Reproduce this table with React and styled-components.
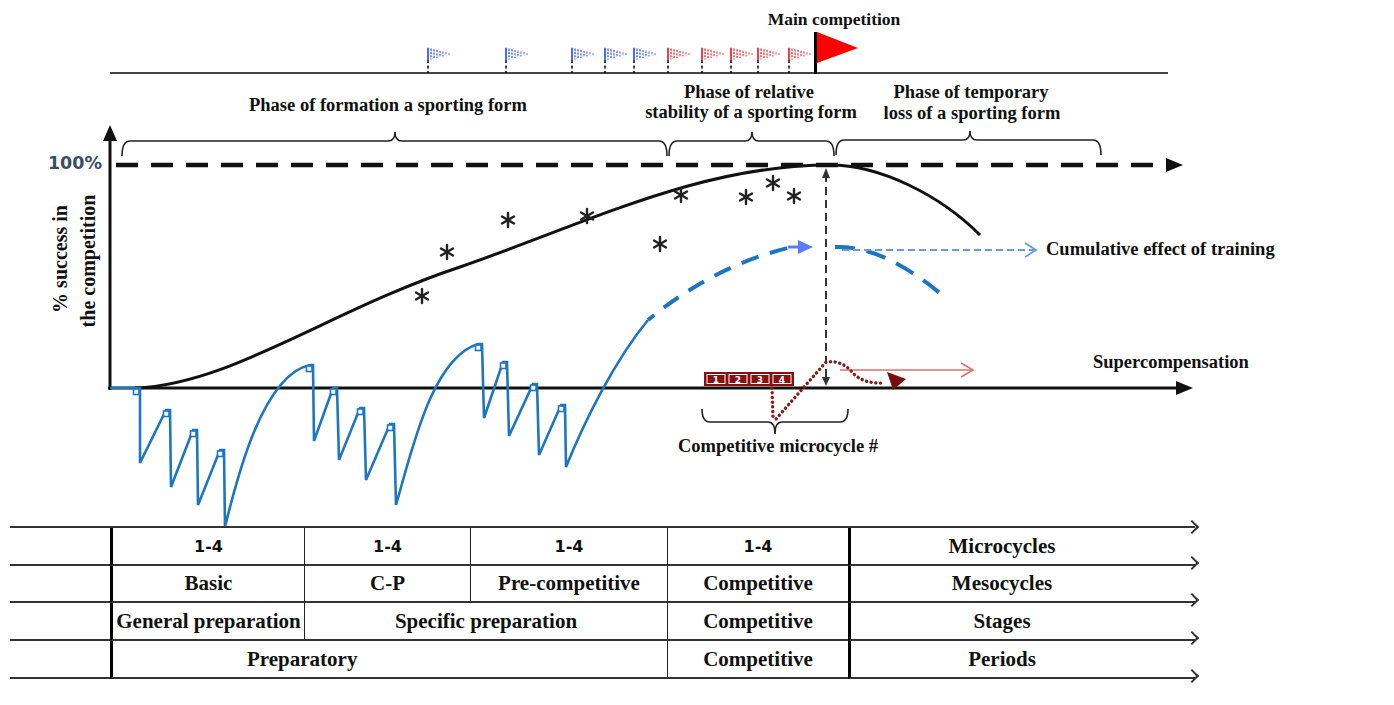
import React from 'react';
import styled, { createGlobalStyle } from 'styled-components';

const GlobalStyle = createGlobalStyle`
  html, body { margin: 0; padding: 0; background: #ffffff; }
  body { font-family: "Liberation Serif", "Times New Roman", serif; color: #111; }
`;

const Page = styled.div`
  position: relative;
  width: 1394px;
  height: 705px;
  overflow: hidden;
  background: #fff;
`;

const Chart = styled.svg`
  display: block;
  width: 1394px;
  height: 526px;
  overflow: visible;
`;

const Label = styled.text`
  font-family: "Liberation Serif", "Times New Roman", serif;
  font-weight: 700;
  font-size: ${p => p.$size || 18.5}px;
  fill: #111;
`;

const SansLabel = styled.text`
  font-family: "DejaVu Sans", "Liberation Sans", sans-serif;
  font-weight: 700;
  font-size: ${p => p.$size || 17}px;
  fill: ${p => p.$color || '#111'};
`;

const Table = styled.div`
  position: relative;
  margin-left: 10px;
  width: 1185px;
  display: grid;
  grid-template-columns: 100px 194px 166px 197px 181px 347px;
  grid-template-rows: 38px 37px 38px 38px;
  border-top: 2px solid #333;
  &::after {
    content: '';
    position: absolute;
    right: -2px;
    top: -6px;
    width: 10px;
    height: 10px;
    box-sizing: border-box;
    border-top: 2px solid #333;
    border-right: 2px solid #333;
    transform: rotate(45deg);
  }
`;

const Cell = styled.div`
  position: relative;
  box-sizing: border-box;
  grid-row: ${p => p.$row};
  grid-column: ${p => p.$col} / span ${p => p.$span || 1};
  display: flex;
  align-items: center;
  justify-content: ${p => (p.$start ? 'flex-start' : 'center')};
  padding-left: ${p => p.$padL || 0}px;
  padding-right: ${p => p.$padR || 0}px;
  border-bottom: 2px solid #333;
  border-left: ${p =>
    p.$edge === 'bold' ? '3px solid #000' : p.$edge === 'thin' ? '1.5px solid #222' : 'none'};
  font-family: ${p =>
    p.$sans ? '"DejaVu Sans", "Liberation Sans", sans-serif' : '"Liberation Serif", "Times New Roman", serif'};
  font-weight: 700;
  font-size: ${p => (p.$sans ? 16 : 21)}px;
  color: #111;
  white-space: nowrap;
  ${p =>
    p.$arrow &&
    `&::after {
      content: '';
      position: absolute;
      right: -2px;
      bottom: -4px;
      width: 10px;
      height: 10px;
      box-sizing: border-box;
      border-top: 2px solid #333;
      border-right: 2px solid #333;
      transform: rotate(45deg);
    }`}
`;

const BLUE = '#1d76c2';

const Flag = ({ x, color }) => (
  <g>
    <line x1={x} y1={60} x2={x} y2={73} stroke="#111" strokeWidth="1.6" strokeDasharray="3 2.5" />
    {[0, 1, 2, 3, 4, 5, 6, 7].map(i => {
      const h = 6.2 * (1 - i / 8.5);
      return (
        <line
          key={i}
          x1={x + i * 3}
          x2={x + i * 3}
          y1={54 - h}
          y2={54 + h}
          stroke={color}
          strokeWidth={i === 0 ? 2 : 1.6}
          strokeDasharray={i === 0 ? undefined : '2.2 1.1'}
          opacity={1 - i * 0.06}
        />
      );
    })}
  </g>
);

const Star = ({ x, y }) => (
  <g stroke="#222" strokeWidth="2.4" strokeLinecap="round">
    <line x1={x} y1={y - 7} x2={x} y2={y + 7} />
    <line x1={x - 6} y1={y - 3.5} x2={x + 6} y2={y + 3.5} />
    <line x1={x - 6} y1={y + 3.5} x2={x + 6} y2={y - 3.5} />
  </g>
);

const braceUp = (x1, x2, xm, y) =>
  `M${x1},${y + 15} Q${x1},${y} ${x1 + 8},${y} L${xm - 7},${y} Q${xm},${y} ${xm},${y - 9} Q${xm},${y} ${xm + 7},${y} L${x2 - 8},${y} Q${x2},${y} ${x2},${y + 15}`;

const braceDown = (x1, x2, xm, y) =>
  `M${x1},${y - 13} Q${x1},${y} ${x1 + 8},${y} L${xm - 7},${y} Q${xm},${y} ${xm},${y + 12} Q${xm},${y} ${xm + 7},${y} L${x2 - 8},${y} Q${x2},${y} ${x2},${y - 13}`;

const corners = [
  [140, 388], [170, 410], [197, 430], [224, 450],
  [313, 365], [337, 388], [364, 408], [394, 424],
  [482, 344], [507, 362], [537, 384], [565, 405],
];

const stars = [
  [422, 296], [447, 252], [508, 220], [587, 216], [660, 244],
  [681, 195], [746, 197], [773, 183], [794, 196],
];

const blueFlags = [428, 506, 572, 605, 634];
const redFlags = [668, 702, 731, 758, 789];

const sawtooth =
  'M110,388 L140,388 L140,463 L166,410 L170,410 L171,487 L193,430 L197,430 L198,505 L220,450 L224,450 L225,527 ' +
  'C236,482 262,375 310,365 L313,365 L314,441 L333,388 L337,388 L339,460 L360,408 L364,408 L366,480 L390,424 L394,424 L396,505 ' +
  'C412,450 432,358 478,344 L482,344 L484,418 L503,362 L507,362 L509,436 L533,384 L537,384 L539,455 L561,405 L565,405 L566,467 ' +
  'C585,420 615,360 648,320';

const ChartDrawing = () => (
  <Chart viewBox="0 0 1394 526">
    {/* top timeline */}
    <Label x={834} y={25} textAnchor="middle" $size={17.5}>Main competition</Label>
    <line x1={110} y1={73} x2={1168} y2={73} stroke="#444" strokeWidth="2" />
    {blueFlags.map(x => <Flag key={x} x={x} color="#4a6cf4" />)}
    {redFlags.map(x => <Flag key={x} x={x} color="#ee4048" />)}
    <rect x={814} y={32} width={3} height={42} fill="#000" />
    <polygon points="817,32 858,48 817,63" fill="#ff0000" />

    {/* phase labels */}
    <Label x={388} y={111} textAnchor="middle">Phase of formation a sporting form</Label>
    <Label x={749} y={98} textAnchor="middle">Phase of relative</Label>
    <Label x={751} y={118} textAnchor="middle">stability of a sporting form</Label>
    <Label x={971} y={98} textAnchor="middle">Phase of temporary</Label>
    <Label x={972} y={119} textAnchor="middle">loss of a sporting form</Label>

    {/* braces */}
    <g fill="none" stroke="#222" strokeWidth="1.6">
      <path d={braceUp(122, 667, 395, 141)} />
      <path d={braceUp(669, 834, 752, 141)} />
      <path d={braceUp(836, 1101, 970, 140)} />
      <path d={braceDown(702, 848, 775, 422)} />
    </g>

    {/* axes */}
    <line x1={110} y1={140} x2={110} y2={390} stroke="#111" strokeWidth="3" />
    <polygon points="110,125 103,141 117,141" fill="#111" />
    <line x1={108} y1={388} x2={1178} y2={388} stroke="#111" strokeWidth="3" />
    <polygon points="1176,381 1193,388 1176,395" fill="#111" />
    <SansLabel x={102} y={169} textAnchor="end" $size={17.5} $color="#3a4c66">100%</SansLabel>
    <line x1={116} y1={165} x2={1166} y2={165} stroke="#111" strokeWidth="4.5" strokeDasharray="22 13" />
    <polygon points="1166,158 1183,165 1166,172" fill="#111" />

    <Label transform="rotate(-90)" x={-259} y={67} textAnchor="middle" $size={20}>% success in</Label>
    <Label transform="rotate(-90)" x={-261} y={95} textAnchor="middle" $size={20}>the competition</Label>

    {/* black performance curve */}
    <path
      d="M135,388 C230,385 330,310 460,267 C590,222 700,165 830,165 C880,165 940,195 980,235"
      fill="none"
      stroke="#111"
      strokeWidth="3"
    />
    {stars.map(([x, y]) => <Star key={x} x={x} y={y} />)}

    {/* blue training curve */}
    <path d={sawtooth} fill="none" stroke={BLUE} strokeWidth="2.6" strokeLinejoin="miter" />
    {corners.map(([x, y]) => (
      <rect key={x} x={x - 6.5} y={y + 1} width={5.5} height={5.5} fill="#fff" stroke={BLUE} strokeWidth="1.6" />
    ))}
    <path d="M648,320 Q715,265 792,247" fill="none" stroke={BLUE} strokeWidth="4" strokeDasharray="18 12" strokeDashoffset="10" />
    <line x1={788} y1={247} x2={800} y2={247} stroke="#5b7cf2" strokeWidth="3" />
    <polygon points="798,240 813,247 798,254" fill="#5b7cf2" />
    <path d="M835,247 Q885,245 948,300" fill="none" stroke={BLUE} strokeWidth="4" strokeDasharray="20 12" />

    {/* cumulative effect arrow */}
    <line x1={842} y1={250} x2={1035} y2={250} stroke="#6b9bd8" strokeWidth="1.8" strokeDasharray="7 4" />
    <polyline points="1025,243 1036,250 1025,257" fill="none" stroke="#6b9bd8" strokeWidth="1.8" />
    <Label x={1046} y={255}>Cumulative effect of training</Label>

    {/* vertical dashed marker */}
    <line x1={826} y1={174} x2={826} y2={380} stroke="#333" strokeWidth="2" strokeDasharray="8 5" />
    <polygon points="822,178 826,168 830,178" fill="#333" />
    <polygon points="822,377 826,386 830,377" fill="#333" />

    {/* supercompensation */}
    <line x1={840} y1={370} x2={972} y2={370} stroke="#d9716f" strokeWidth="1.6" />
    <polyline points="961,363 973,370 961,377" fill="none" stroke="#d9716f" strokeWidth="1.6" />
    <path
      d="M772,388 L773,417 L776,419 L826,362 Q842,360 852,372 Q862,384 884,383"
      fill="none"
      stroke="#8b1a1a"
      strokeWidth="3.4"
      strokeDasharray="0.1 4.6"
      strokeLinecap="round"
    />
    <polygon points="887,372 906,379 893,390" fill="#7a0e0e" />
    <rect x={704} y={372} width={90} height={14} fill="#8a1010" />
    {[0, 1, 2, 3].map(i => (
      <g key={i}>
        <rect x={707 + i * 22} y={374.5} width={18} height={9} fill="none" stroke="#fff" strokeWidth="1" />
        <SansLabel x={716 + i * 22} y={383} textAnchor="middle" $size={9} $color="#fff">{i + 1}</SansLabel>
      </g>
    ))}
    <Label x={1093} y={368}>Supercompensation</Label>
    <Label x={778} y={452} textAnchor="middle">Competitive microcycle #</Label>
  </Chart>
);

const rows = [
  [
    { col: 1 },
    { col: 2, text: '1-4', sans: true, edge: 'bold' },
    { col: 3, text: '1-4', sans: true, edge: 'thin' },
    { col: 4, text: '1-4', sans: true, edge: 'thin' },
    { col: 5, text: '1-4', sans: true, edge: 'thin' },
    { col: 6, text: 'Microcycles', edge: 'bold', arrow: true, padR: 42 },
  ],
  [
    { col: 1 },
    { col: 2, text: 'Basic', edge: 'bold' },
    { col: 3, text: 'C-P', edge: 'thin' },
    { col: 4, text: 'Pre-competitive', edge: 'thin' },
    { col: 5, text: 'Competitive', edge: 'thin' },
    { col: 6, text: 'Mesocycles', edge: 'bold', arrow: true, padR: 42 },
  ],
  [
    { col: 1 },
    { col: 2, text: 'General preparation', edge: 'bold' },
    { col: 3, span: 2, text: 'Specific preparation', edge: 'thin' },
    { col: 5, text: 'Competitive', edge: 'thin' },
    { col: 6, text: 'Stages', edge: 'bold', arrow: true, padR: 42 },
  ],
  [
    { col: 1 },
    { col: 2, span: 3, text: 'Preparatory', edge: 'bold', start: true, padL: 134 },
    { col: 5, text: 'Competitive', edge: 'thin' },
    { col: 6, text: 'Periods', edge: 'bold', arrow: true, padR: 42 },
  ],
];

const PeriodTable = () => (
  <Table>
    {rows.map((cells, r) =>
      cells.map(c => (
        <Cell
          key={`${r}-${c.col}`}
          $row={r + 1}
          $col={c.col}
          $span={c.span}
          $sans={c.sans}
          $edge={c.edge}
          $arrow={c.arrow}
          $start={c.start}
          $padL={c.padL}
          $padR={c.padR}
        >
          {c.text}
        </Cell>
      ))
    )}
  </Table>
);

export default function App() {
  return (
    <>
      <GlobalStyle />
      <Page>
        <ChartDrawing />
        <PeriodTable />
      </Page>
    </>
  );
}
